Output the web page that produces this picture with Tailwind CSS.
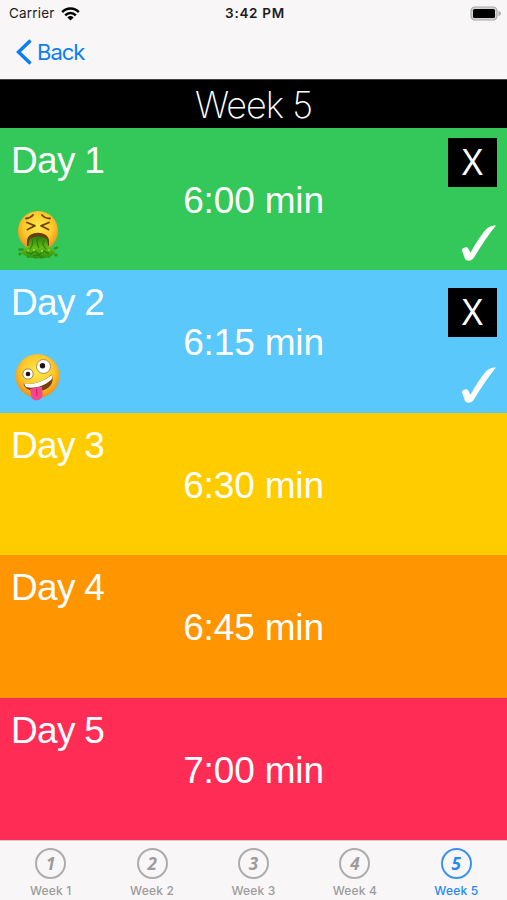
<!DOCTYPE html>
<html lang="en">
<head>
<meta charset="utf-8">
<title>Week 5</title>
<script src="https://cdn.jsdelivr.net/npm/@tailwindcss/browser@4"></script>
</head>
<body class="w-[507px] h-[900px] overflow-hidden bg-[#f8f6f7] font-['Liberation_Sans',sans-serif] flex flex-col">
<svg class="absolute size-0">
  <defs>
    <radialGradient id="face" cx=".5" cy=".4" r=".6"><stop offset="0" stop-color="#ffe94a"/><stop offset=".6" stop-color="#fdc92c"/><stop offset="1" stop-color="#ee8d16"/></radialGradient>
    <linearGradient id="vomit" x1="0" y1="0" x2="0" y2="1"><stop offset="0" stop-color="#2f7d0c"/><stop offset=".5" stop-color="#62bb15"/><stop offset="1" stop-color="#2d8f12"/></linearGradient>
    <symbol id="check" viewBox="0 0 36 37"><path d="M.8 25 C2 22 6.300 21.500 7.200 23.400 L9.500 27.800 C15.500 17 22.500 6 27 2.800 C29.300 1.200 32 .6 35 .6 C27.500 9.500 20 21 12.800 32.800 C10.300 36.800 5 36.600 3.900 33.600 Z" fill="#fff"/></symbol>
  </defs>
</svg>

<header class="h-[79px] shrink-0 font-[Inter,sans-serif]">
  <div class="grid grid-cols-3 items-center h-[27px] text-[13.500px] text-[#1c1c1c] pl-[9px] pr-[6px]">
    <div class="flex items-center gap-[6px]"><span class="tracking-[0.2px]">Carrier</span>
      <svg class="w-[19px] h-[14px]" viewBox="0 0 19 14"><g fill="none" stroke="#000" stroke-width="2.500"><path d="M1.200 5.100 A11.500 11.500 0 0 1 17.800 5.100"/><path d="M4.200 8.300 A7.500 7.500 0 0 1 14.800 8.300"/></g><path d="M6.400 10.400 A4.500 4.500 0 0 1 12.600 10.400 L9.500 13.600 Z"/></svg>
    </div>
    <div class="text-center font-semibold tracking-[0.700px] whitespace-nowrap">3:42 PM</div>
    <div class="flex justify-end"><svg class="w-[31px] h-[15px]" viewBox="0 0 31 15"><rect x="1" y="1" width="26" height="13" rx="4" fill="#d4d3d3" stroke="#a9a8a9" stroke-width="1.200"/><rect x="3" y="3" width="22" height="9" rx="1.500"/><path d="M28.500 4.800 Q31 5.800 31 7.500 T28.500 10.200Z" fill="#aaa"/></svg></div>
  </div>
  <div class="flex items-center h-[50px] pl-[16px] text-[#0b7df5] gap-[5px]">
    <svg class="w-[16px] h-[26px]" viewBox="0 0 16 26"><path d="M14.500 1.500 L2.500 13 L14.500 24.500" fill="none" stroke="#0b7df5" stroke-width="3.400"/></svg>
    <span class="text-[22px] tracking-[-1px]">Back</span>
  </div>
</header>

<h1 class="h-[49px] shrink-0 bg-black text-white flex items-center justify-center font-[Inter,sans-serif] font-extralight text-[36px] tracking-[-1px] pt-[1px] border-t border-[#444]">Week 5</h1>

<main class="flex-1 grid grid-rows-5 min-h-0 text-white text-[37px] leading-[42px]">
  <section class="grid grid-cols-[120px_1fr_120px] bg-[#34c759]">
    <div class="pl-[11px] pt-[12px]"><div class="tracking-[-0.7px]">Day 1</div>
      <svg class="w-[44px] h-[50px] mt-[28px] ml-[5px]" viewBox="0 0 44 50"><circle cx="22" cy="21" r="20" fill="url(#face)"/><g fill="none" stroke="#70400a" stroke-width="1.800" stroke-linecap="round" stroke-linejoin="round"><path d="M10 8.500 Q14.500 8 17 5"/><path d="M26 5 Q29 8.500 34 8.500"/><path d="M11 12.500 L19 15.800 L11.500 19.500"/><path d="M33 12.500 L25 15.800 L32.500 19.500"/></g><path d="M11 36 V31 C11 20 33 20 33 31 V36 Z" fill="#693e08"/><path d="M13 31 C14 25 31 25 31.500 31 C31.500 38 36 38 38 41 C42 45 33 45 34 48 C29 46 28 50 23 48 C18 50 17 46 11 48 C11 44 4 46 6 41 C9 39 13 39 13 31Z" fill="url(#vomit)"/><g fill="#378f13"><ellipse cx="5" cy="39.500" rx="3" ry="1.300"/><ellipse cx="40" cy="38" rx="2.500" ry="1.200" transform="rotate(-20 40 38)"/><circle cx="4" cy="44" r="1.500"/><circle cx="40" cy="45" r="1.600"/></g><g fill="none" stroke="#2b7f10" stroke-width="1.200"><path d="M16 30 Q18 34 14 39 M22 28 Q20 34 23 38 M28 30 Q25 34 30 39 M10 42 l5 2 4-3 4 4 5-4 5 3 M17 46 l5-1 4 2"/></g><g fill="#95d934"><circle cx="18" cy="40" r="1.200"/><circle cx="26" cy="41" r="1.200"/><circle cx="12" cy="40.500" r="1"/><circle cx="33" cy="40" r="1"/></g></svg>
    </div>
    <div class="text-center pt-[52px] tracking-[-0.15px]">6:00 min</div>
    <div class="flex flex-col items-end pt-[10px] pr-[10px]"><div class="w-[49px] h-[49px] bg-black flex items-center justify-center"><span class="scale-x-90">X</span></div><svg class="w-[36px] h-[37px] mt-[38px]"><use href="#check"/></svg></div>
  </section>
  <section class="grid grid-cols-[120px_1fr_120px] bg-[#5ac8fa]">
    <div class="pl-[11px] pt-[12px]"><div class="tracking-[-0.7px]">Day 2</div>
      <svg class="w-[46px] h-[48px] mt-[29px] ml-[4px]" viewBox="0 0 46 48"><circle cx="22.500" cy="23" r="22" fill="url(#face)"/><circle cx="13" cy="21" r="5.200" fill="#fff" stroke="#a98a4a" stroke-width="1"/><circle cx="13" cy="21" r="2.300" fill="#211"/><circle cx="28.500" cy="13.500" r="7" fill="#fff" stroke="#a98a4a" stroke-width="1"/><circle cx="27.500" cy="12.800" r="2.700" fill="#211"/><path d="M8.500 30.500 C17 32.500 30 28 36.500 21.500 C41 31 31 39 22 38 C14 38 9 35 8.500 30.500Z" fill="#704017"/><path d="M9 30.500 C18 32.500 30 28 36.500 22 Q38 25 36 27 C28 34 18 36 11 34Z" fill="#fff"/><path d="M15 36 Q22 34 27 33.500 L27.500 42 C27 49 16 49 16 42Z" fill="#f5468e"/><path d="M21.500 36 L22 43" stroke="#cc2468" stroke-width="1.200"/></svg>
    </div>
    <div class="text-center pt-[52px] tracking-[-0.15px]">6:15 min</div>
    <div class="flex flex-col items-end pt-[18px] pr-[10px]"><div class="w-[49px] h-[49px] bg-black flex items-center justify-center"><span class="scale-x-90">X</span></div><svg class="w-[36px] h-[37px] mt-[30px]"><use href="#check"/></svg></div>
  </section>
  <section class="grid grid-cols-[120px_1fr_120px] bg-[#ffcc00]"><div class="pl-[11px] pt-[12px] tracking-[-0.7px]">Day 3</div><div class="text-center pt-[52px] tracking-[-0.15px]">6:30 min</div></section>
  <section class="grid grid-cols-[120px_1fr_120px] bg-[#ff9500]"><div class="pl-[11px] pt-[12px] tracking-[-0.7px]">Day 4</div><div class="text-center pt-[52px] tracking-[-0.15px]">6:45 min</div></section>
  <section class="grid grid-cols-[120px_1fr_120px] bg-[#ff2d55]"><div class="pl-[11px] pt-[12px] tracking-[-0.7px]">Day 5</div><div class="text-center pt-[52px] tracking-[-0.15px]">7:00 min</div></section>
</main>

<nav class="h-[60px] shrink-0 grid grid-cols-5 border-t border-[#d5cdd0] pt-[7px] text-[#9c9b9c] font-[Inter,sans-serif] text-[12px] leading-[16px] font-medium tracking-[0.2px]">
  <a class="flex flex-col items-center gap-[4px]"><span class="size-[31px] rounded-full border-2 border-[#adacad] flex items-center justify-center font-['Open_Sans'] text-[17px] tracking-normal font-bold italic">1</span>Week 1</a>
  <a class="flex flex-col items-center gap-[4px]"><span class="size-[31px] rounded-full border-2 border-[#adacad] flex items-center justify-center font-['Open_Sans'] text-[17px] tracking-normal font-bold italic">2</span>Week 2</a>
  <a class="flex flex-col items-center gap-[4px]"><span class="size-[31px] rounded-full border-2 border-[#adacad] flex items-center justify-center font-['Open_Sans'] text-[17px] tracking-normal font-bold italic">3</span>Week 3</a>
  <a class="flex flex-col items-center gap-[4px]"><span class="size-[31px] rounded-full border-2 border-[#adacad] flex items-center justify-center font-['Open_Sans'] text-[17px] tracking-normal font-bold italic">4</span>Week 4</a>
  <a class="flex flex-col items-center gap-[4px] text-[#2589f5]"><span class="size-[31px] rounded-full border-2 border-[#3b92f3] flex items-center justify-center font-['Open_Sans'] text-[17px] tracking-normal font-bold italic">5</span>Week 5</a>
</nav>
</body>
</html>
